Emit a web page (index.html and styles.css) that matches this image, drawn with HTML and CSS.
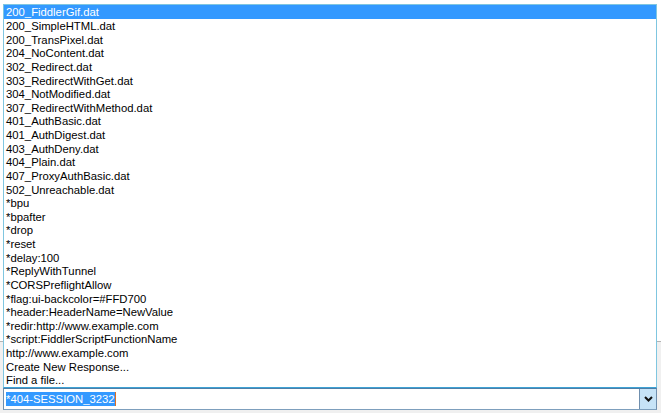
FILE: index.html
```html
<!DOCTYPE html>
<html>
<head>
<meta charset="utf-8">
<link rel="stylesheet" href="styles.css">
</head>
<body>
<div class="page">
  <ul class="list">
    <li class="item selected">200_FiddlerGif.dat</li>
    <li class="item">200_SimpleHTML.dat</li>
    <li class="item">200_TransPixel.dat</li>
    <li class="item">204_NoContent.dat</li>
    <li class="item">302_Redirect.dat</li>
    <li class="item">303_RedirectWithGet.dat</li>
    <li class="item">304_NotModified.dat</li>
    <li class="item">307_RedirectWithMethod.dat</li>
    <li class="item">401_AuthBasic.dat</li>
    <li class="item">401_AuthDigest.dat</li>
    <li class="item">403_AuthDeny.dat</li>
    <li class="item">404_Plain.dat</li>
    <li class="item">407_ProxyAuthBasic.dat</li>
    <li class="item">502_Unreachable.dat</li>
    <li class="item">*bpu</li>
    <li class="item">*bpafter</li>
    <li class="item">*drop</li>
    <li class="item">*reset</li>
    <li class="item">*delay:100</li>
    <li class="item">*ReplyWithTunnel</li>
    <li class="item">*CORSPreflightAllow</li>
    <li class="item">*flag:ui-backcolor=#FFD700</li>
    <li class="item">*header:HeaderName=NewValue</li>
    <li class="item">*redir:http://www.example.com</li>
    <li class="item">*script:FiddlerScriptFunctionName</li>
    <li class="item">http://www.example.com</li>
    <li class="item">Create New Response...</li>
    <li class="item">Find a file...</li>
  </ul>
  <div class="combo">
    <div class="field"><span class="sel">*404-SESSION_3232</span><span class="caret"></span></div>
    <div class="drop">
      <svg width="9" height="6" viewBox="0 0 9 6"><polyline points="1,1 4.5,4.5 8,1" fill="none" stroke="#111" stroke-width="2"/></svg>
    </div>
  </div>
</div>
</body>
</html>
```
FILE: styles.css
```css
html, body {
  margin: 0;
  padding: 0;
}
body {
  width: 661px;
  height: 413px;
  overflow: hidden;
  background: linear-gradient(to bottom, #ffffff 0, #ffffff 341px, #b4b4b4 341px, #b4b4b4 342px, #f0f0f0 342px);
  font-family: "Liberation Sans", Arial, sans-serif;
  font-size: 11.3px;
  color: #000;
}
.page {
  padding: 4px 4px 0 3px;
  display: flex;
  flex-direction: column;
}
.list {
  list-style: none;
  margin: 0;
  padding: 0 0 1px 0;
  background: #fff;
  border: 1px solid #7fc6e0;
  border-bottom: 1px solid #3ea2d4;
  height: 381px;
  box-sizing: content-box;
}
.item {
  height: 13.63px;
  line-height: 14.6px;
  padding-left: 2px;
  white-space: nowrap;
}
.item.selected {
  background: #3399ff;
  color: #fff;
  height: 14px;
  line-height: 15px;
}
.combo {
  display: flex;
  height: 20px;
  border: 1px solid #4d7ea8;
  border-bottom-color: #7d9fbd;
  border-left-color: #6f8fae;
  border-right-color: #6f8fae;
  background: #fff;
}
.field {
  flex: 1;
  display: flex;
  align-items: center;
  padding-left: 2px;
}
.sel {
  background: #3399ff;
  color: #fff;
  line-height: 14px;
}
.caret {
  width: 1px;
  height: 14px;
  background: #e07020;
}
.drop {
  width: 16px;
  background: #c6e3f7;
  border-left: 1px solid #6f8fae;
  display: flex;
  align-items: center;
  justify-content: center;
}
```
